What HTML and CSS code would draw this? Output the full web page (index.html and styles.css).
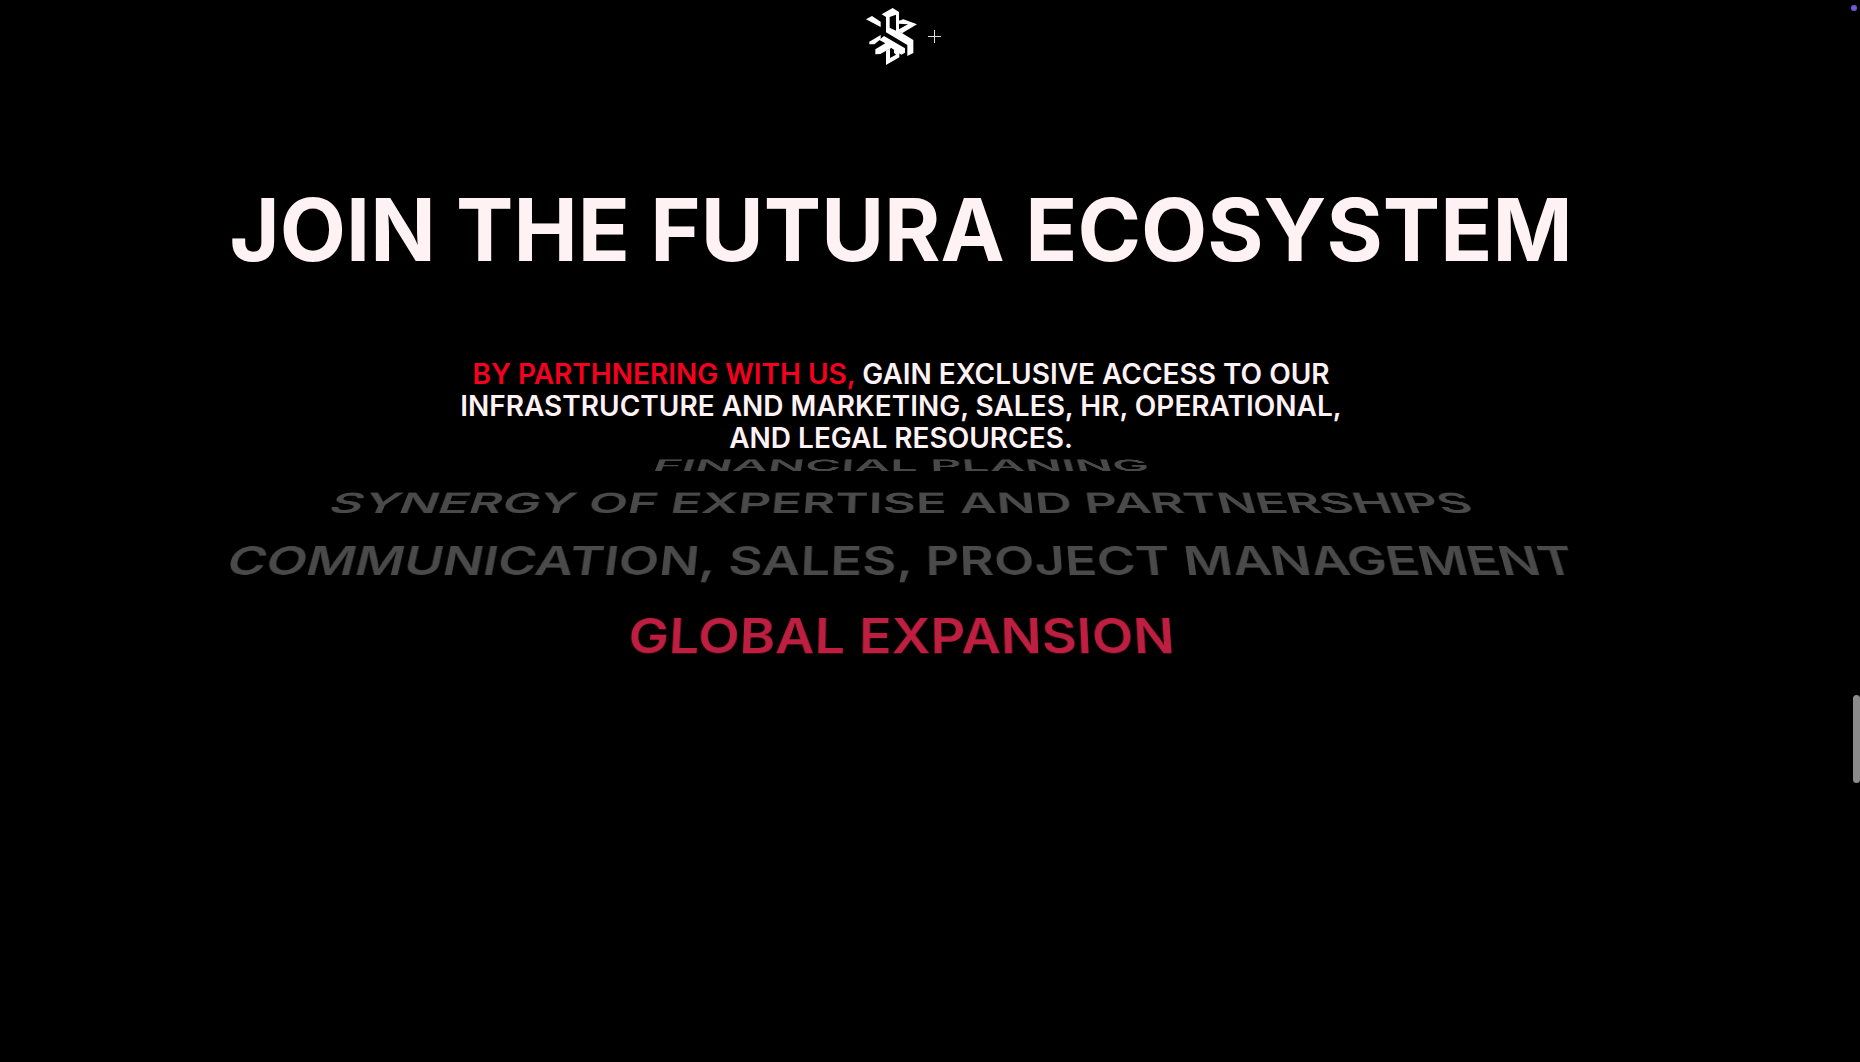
FILE: index.html
```
<!DOCTYPE html>
<html lang="en">
<head>
  <meta charset="utf-8">
  <meta name="viewport" content="width=device-width, initial-scale=1">
  <title>Futura Ecosystem</title>
  <link rel="stylesheet" href="styles.css">
</head>
<body>
  <div class="page">
    <header class="site-header">
      <a class="logo" href="#" aria-label="Futura home">
        <svg class="logo-mark" viewBox="0 0 153 171" aria-hidden="true">
          <g fill="#fff">
            <path d="M0 34 18 24 44 41V57Z"/>
            <path fill-rule="evenodd" d="M47 19 80 0 99 12V38L112 34 153 49 108 76 94 67 142 96V135L124 144V111L60 73V27ZM71 27V59L90 68V20ZM99 47V64L126 49Z"/>
            <path d="M10 101 44 81V94L25 109H10Z"/>
            <path d="M28 124 58 106 40 96 54 84 117 121V134L106 140 76 120 43 138 28 139Z"/>
            <path d="M60 128 72 122V150L90 140 84 134V124L100 133V148L60 171Z"/>
          </g>
        </svg>
      </a>
      <button class="menu-toggle" type="button" aria-label="Open menu"></button>
    </header>

    <main class="join">
      <h1 class="join-title">Join the Futura ecosystem</h1>
      <p class="join-lead">
        <span class="accent">By parthnering with us,</span> gain exclusive access to our<br>
        infrastructure and marketing, sales, HR, operational,<br>
        and legal resources.
      </p>
      <div class="wheel-scene">
        <ul class="wheel">
          <li class="wheel-item step-4">Financial planing</li>
          <li class="wheel-item step-3">Synergy of expertise and partnerships</li>
          <li class="wheel-item step-2">Communication, sales, project management</li>
          <li class="wheel-item step-1 is-active">Global expansion</li>
        </ul>
      </div>
    </main>
  </div>

  <span class="status-dot"></span>
  <span class="scroll-thumb"></span>
</body>
</html>
```
FILE: styles.css
```
*,
*::before,
*::after {
  box-sizing: border-box;
}

body {
  margin: 0;
  min-height: 100vh;
  overflow-x: hidden;
  background: #000;
  color: #fff2f5;
  font-family: Inter, "Liberation Sans", sans-serif;
  text-transform: uppercase;
}

.page {
  padding-right: 58px;
}

.site-header {
  display: flex;
  justify-content: center;
  align-items: center;
  gap: 11px;
  padding: 8px 0 0 4px;
}

.logo {
  display: block;
}

.logo-mark {
  display: block;
  width: 51px;
  height: 57px;
}

.menu-toggle {
  width: 13px;
  height: 13px;
  padding: 0;
  border: 0;
  background:
    linear-gradient(#ddd, #ddd) center / 13px 1px no-repeat,
    linear-gradient(#ddd, #ddd) center / 1px 13px no-repeat;
  cursor: pointer;
}

.join {
  display: flex;
  flex-direction: column;
  align-items: center;
  padding-top: 113px;
  text-align: center;
}

.join-title {
  margin: 0;
  font-size: 86px;
  font-weight: 700;
  line-height: 104px;
  white-space: nowrap;
}

.join-lead {
  margin: 76px 0 0;
  font-size: 28px;
  font-weight: 600;
  line-height: 32px;
}

.accent {
  color: #f7001f;
}

/* Services wheel: a cylinder turned about its horizontal axis */
.wheel-scene {
  align-self: stretch;
  height: 608px;
  margin-top: 22px;
  perspective: 1600px;
}

.wheel {
  display: grid;
  align-items: center;
  justify-items: center;
  height: 100%;
  margin: 0;
  padding: 0;
  list-style: none;
  transform: translateZ(-410px);
  transform-style: preserve-3d;
}

.wheel-item {
  grid-area: 1 / 1;
  color: #4b4a4b;
  font-size: 55px;
  font-weight: 600;
  line-height: 64px;
  white-space: nowrap;
}

.wheel-item.is-active {
  color: #be1e40;
}

.step-1 {
  transform: rotateX(21deg) translateZ(410px);
}

.step-2 {
  transform: rotateX(34deg) translateZ(410px);
}

.step-3 {
  transform: rotateX(47deg) translateZ(410px);
}

.step-4 {
  transform: rotateX(60deg) translateZ(410px);
}

.status-dot {
  position: fixed;
  top: 5px;
  right: 3px;
  width: 6px;
  height: 6px;
  border-radius: 50%;
  background: #6d5ad8;
}

.scroll-thumb {
  position: fixed;
  top: 695px;
  right: 0;
  width: 7px;
  height: 88px;
  border-radius: 4px;
  background: #8b8b8b;
}
```
